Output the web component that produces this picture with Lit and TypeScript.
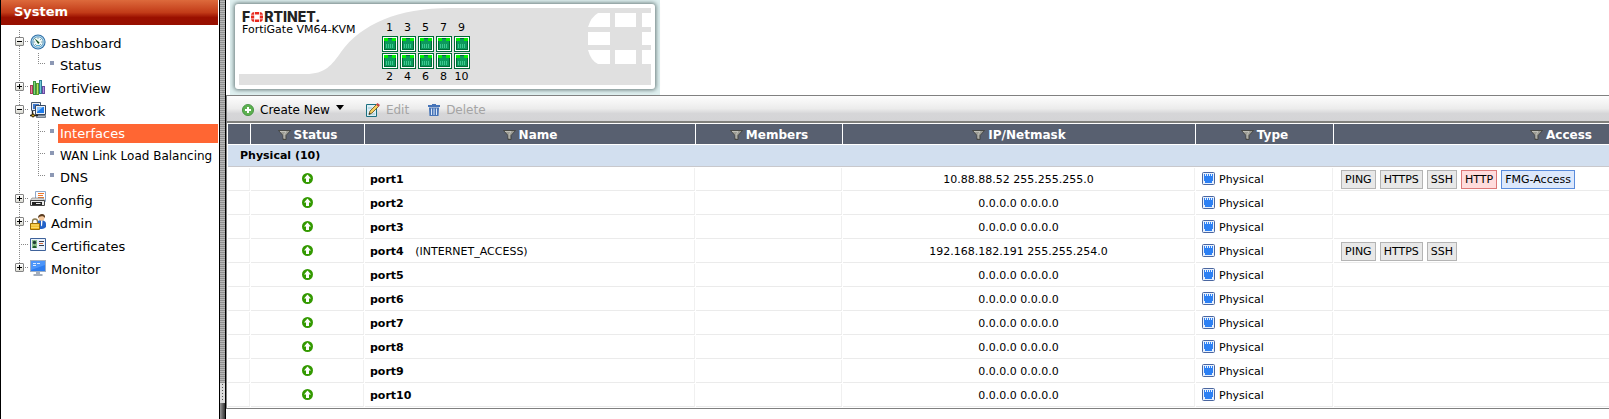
import { LitElement, html, svg, css, nothing } from "lit";
import { customElement, property, state } from "lit/decorators.js";
import { classMap } from "lit/directives/class-map.js";

const icons: Record<string, unknown> = {
  Dashboard: svg`<circle cx="8" cy="8" r="7.6" fill="#2f6fa6"/><circle cx="8" cy="8" r="6.5" fill="#b9dff2"/><circle cx="8" cy="8" r="5.2" fill="#f2faf4" stroke="#4f90bc" stroke-width=".8"/><path d="M4.6 8h-1M12.4 8h-1M8 3.6v1M11.2 4.8l-.8.8M4.8 11.2l.8-.8M11.2 11.2l-.8-.8" stroke="#37698a"/><path d="M4.2 4l5.400 4.6-1.400 1.400z" fill="#14501e"/><path d="M6 11.500h4" stroke="#57b0d8"/>`,
  FortiView: svg`<path d="M0 6h3v9H0z" fill="#b03a5c"/><path d="M1 7h1v7H1z" fill="#e2869e"/><path d="M3 2h3v14H3z" fill="#3c9440"/><path d="M4 3h1v12H4z" fill="#86d678"/><path d="M6 4h3v12H6z" fill="#5c9e2c"/><path d="M7 5h1v10H7z" fill="#b6e264"/><path d="M9 1h3v14H9z" fill="#2e7d96"/><path d="M10 2h1v12h-1z" fill="#74c8d8"/><path d="M12 7h3v8h-3z" fill="#6a4aa0"/><path d="M13 8h1v6h-1z" fill="#ae94dc"/>`,
  Network: svg`<path d="M1.500.5h9v8h-9z" fill="#e9edf2" stroke="#45566e"/><path d="M3 2h6v5H3z" fill="#3a78d0"/><path d="M5.500 3.500h10v9h-10z" fill="#eef1f6" stroke="#38485e"/><path d="M7 5h7v6H7z" fill="#1f7cec"/><path d="M7 5h6L7 10z" fill="#8cc4fa"/><path d="M6.500 13.500h9v2h-9z" fill="#aab4c0" stroke="#4c5a6c" stroke-width=".7"/><path d="M2.500 9v4M0 13.500h8" stroke="#222" stroke-width="1.4"/><path d="M3 11l2.4 2.4L3 15.8.6 13.4z" fill="#3e2e08"/><path d="M3 12.500l1 1-1 1-1-1z" fill="#f1c232"/>`,
  Config: svg`<path d="M5.5.5h10v10h-10z" fill="#fbfcff" stroke="#8fa7c8"/><path d="M8 2.500h6M8 4.500h5M8 6.500h6" stroke="#f07828"/><path d="M2 7h11l2 3H0z" fill="#d8d8d8" stroke="#777" stroke-width=".6"/><path d="M.5 9.500h14v5H.5z" fill="#ececec" stroke="#444"/><path d="M2 11h10v3H2z" fill="#222"/><path d="M6 12h4.500v1H6z" fill="#e8e8e8"/>`,
  Admin: svg`<path d="M7 15V9c0-2 2-3 4-3s5 1 5 4v3c-1 1-3 2-4 2z" fill="#2463c8"/><path d="M11 6.500l1.500 0-.5 6-1-1z" fill="#fff"/><circle cx="11.500" cy="3.800" r="3" fill="#f5c89c"/><path d="M8 4C8 1 10 0 12 0s3.500 1.400 3 4c-1-1.500-2-2-3.500-1.800S9 3 8 4z" fill="#5a3c20"/><path d="M2.500 10V7.500a2.500 2.500 0 0 1 5 0V10" fill="none" stroke="#8a7a50" stroke-width="1.3"/><path d="M.5 9.500h9v6h-9z" fill="#f2b820" stroke="#9a6c08"/><path d="M1 11h8M1 13.300h8" stroke="#fde37c"/>`,
  Certificates: svg`<path d="M.5 1.500h15v12H.500z" fill="#e9f2fc" stroke="#3f629a"/><path d="M2 3h5v8H2z" fill="#8cc08c"/><circle cx="4.500" cy="5.500" r="1.700" fill="#1c3c34"/><path d="M2.500 11c0-3 4-3 4 0z" fill="#1c5c2c"/><path d="M9 4.500h5" stroke="#303c50"/><path d="M9 6.500h4" stroke="#d87040"/><path d="M9 8.500h5" stroke="#303c50"/>`,
  Monitor: svg`<path d="M0 0h16v12H0z" fill="#9eaec4"/><path d="M1 1h14v10H1z" fill="#2d7df0"/><path d="M1 1h14v4L1 10z" fill="#4b95fa"/><path d="M3 3.500h3M7 3.500h3M3 5.500h3" stroke="#d8eaff"/><path d="M6 12h4v2h2.500v2h-9v-2H6z" fill="#a4aebc"/>`,
};

interface TreeNode { label: string; open?: boolean; leaf?: boolean; children?: string[] }

const tree: TreeNode[] = [
  { label: "Dashboard", open: true, children: ["Status"] },
  { label: "FortiView" },
  { label: "Network", open: true, children: ["Interfaces", "WAN Link Load Balancing", "DNS"] },
  { label: "Config" },
  { label: "Admin" },
  { label: "Certificates", leaf: true },
  { label: "Monitor" },
];

@customElement("nav-tree")
class NavTree extends LitElement {
  @state() selected = "Interfaces";
  @state() closed = new Set<string>();

  static styles = css`
    :host { display: block; background: #fff; }
    h2 {
      margin: 0; padding: 0 13px; height: 25px; line-height: 23px; box-sizing: border-box;
      font-size: 13px; font-weight: bold; color: #fff;
      background: linear-gradient(#dd6a3c, #c23b18 50%, #9a1000 70%, #970f00);
    }
    ul { list-style: none; margin: 0; padding: 0; }
    .root {
      margin-top: 5px;
      background: repeating-linear-gradient(#888 0 1px, transparent 1px 2px) 18px 0 / 1px calc(100% - 12px) no-repeat;
    }
    .row { display: flex; align-items: center; height: 23px; padding-left: 14px; }
    .toggle {
      width: 9px; height: 9px; padding: 0; border: 1px solid #848484; border-radius: 1px;
      background: linear-gradient(#fff, #dcdcd4); display: grid; place-items: center;
    }
    .toggle svg { display: block; }
    .blank { width: 4px; margin-right: 1px; }
    .dash { width: 4px; height: 1px; margin: 0 1px; background: repeating-linear-gradient(90deg, #888 0 1px, transparent 1px 2px); }
    .blank + .dash { width: 8px; }
    .icon { width: 16px; height: 16px; margin-right: 5px; flex: none; }
    a { color: #000; text-decoration: none; white-space: nowrap; }
    .row > a { padding-top: 4px; }
    .sub {
      background: repeating-linear-gradient(#888 0 1px, transparent 1px 2px) 37px 0 / 1px calc(100% - 12px) no-repeat;
    }
    .child { display: flex; align-items: center; height: 22px; padding-left: 37px; }
    .child .dash { width: 8px; margin: 0 4px 2px 0; }
    .bullet { width: 4px; height: 4px; margin: 0 4px 2px 0; background: #8c98b4; flex: none; }
    .child a { flex: 1; padding-left: 2px; height: 19px; line-height: 20px; min-width: 0; margin-top: 2px; }
    .child a.long { font-size: 12px; }
    .child a.selected { background: #ff6633; color: #fff; }
  `;

  toggle(label: string) {
    const next = new Set(this.closed);
    next.has(label) ? next.delete(label) : next.add(label);
    this.closed = next;
  }

  render() {
    return html`
      <h2>System</h2>
      <ul class="root">
        ${tree.map((n) => {
          const open = !!n.open && !this.closed.has(n.label);
          return html`<li>
            <div class="row">
              ${n.leaf
                ? html`<span class="blank"></span>`
                : html`<button class="toggle" aria-label="Toggle ${n.label}" aria-expanded=${open} @click=${() => this.toggle(n.label)}>
                    <svg width="5" height="5"><path d=${open ? "M0 2.5h5" : "M0 2.5h5M2.500 0v5"} stroke="#000" /></svg>
                  </button>`}
              <span class="dash"></span>
              <svg class="icon" viewBox="0 0 16 16">${icons[n.label]}</svg>
              <a href="#${n.label}">${n.label}</a>
            </div>
            ${open
              ? html`<ul class="sub">
                  ${n.children!.map(
                    (c) => html`<li class="child">
                      <span class="dash"></span><span class="bullet"></span>
                      <a href="#${c}" class=${classMap({ selected: c === this.selected, long: c.length > 20 })} @click=${() => (this.selected = c)}>${c}</a>
                    </li>`
                  )}
                </ul>`
              : nothing}
          </li>`;
        })}
      </ul>
    `;
  }
}

@customElement("device-panel")
class DevicePanel extends LitElement {
  @property() model = "FortiGate VM64-KVM";

  static styles = css`
    :host { display: block; }
    .halo { width: max-content; margin-left: 4px; padding: 4px 5px 6px; background: #dff0f0; }
    .unit {
      display: grid; padding: 4px; background: #fff; border-radius: 3px;
      box-shadow: 0 0 4px 1px #667878;
    }
    .face, .front { grid-area: 1 / 1; }
    .face { display: block; }
    .front { display: flex; align-items: flex-start; gap: 26px; padding: 0 3px; font-size: 11px; line-height: 14px; }
    .brand { padding-top: 2px; }
    .logo {
      display: flex; align-items: center; height: 13px; color: #222;
      font: 800 14px/12px Inter, "DejaVu Sans", sans-serif;
    }
    .ring { margin: 0 1px; }
    .ports { display: grid; grid-template-columns: repeat(5, 16px); gap: 1px 2px; justify-items: center; padding-top: 12px; }
    .ports span { line-height: 15px; }
    .ports .low { line-height: 14px; }
    .ports svg { display: block; }
  `;

  jack() {
    return html`<svg width="16" height="16" viewBox="0 0 16 16">
      <path fill="#006a36" d="M0 0h16v16H0z" /><path fill="#fff" d="M1 1h14v14H1z" />
      <path fill="#006a36" d="M2 2h12v12H2z" />
      <path fill="#00f000" d="M2 2h4v3H2zM10 2h4v3h-4z" />
      <path fill="#0c9a5c" d="M6 3h4v2h3v8H3V5h3z" />
      <path stroke="#3cc890" d="M4.500 8v4M6.500 8v4M8.500 8v4M10.500 8v4" />
    </svg>`;
  }

  render() {
    const odd = [1, 3, 5, 7, 9];
    return html`<div class="halo"><div class="unit">
      <svg class="face" width="412" height="77" viewBox="0 0 412 77">
        <path fill="#e0e0e0" d="M0 66H67C86 66 93 57 102 44C122 16 160 0 210 0H412V77H0Z" />
        <path fill="#fff" d="M371 5v14h-22q3-10 10-14zM376 5h21v14h-21zM403 5h9v14h-9zM349 24h22v13h-22zM403 24h9v13h-9zM349 42h22v14h-12q-7-3-10-14zM376 42h21v14h-21zM403 42h9v14h-9z" />
      </svg>
      <div class="front">
        <div class="brand">
          <div class="logo" role="img" aria-label="Fortinet">
            <span>F</span>
            <svg class="ring" width="12" height="10" viewBox="0 0 12 10"><path fill="#e8281e" d="M4 0h4v2.500H4zM4 7.500h4V10H4zM0 3.600h3.200v2.800H0zM8.800 3.600H12v2.800H8.800zM3.200 0v2.800H0Q.3.300 3.200 0zM8.800 0v2.800H12Q11.700.300 8.800 0zM3.200 10V7.200H0Q.3 9.700 3.200 10zM8.800 10V7.200H12Q11.700 9.700 8.800 10z" /></svg>
            <span>RTINET.</span>
          </div>
          <div>${this.model}</div>
        </div>
        <div class="ports">
          ${odd.map((n) => html`<span>${n}</span>`)}
          ${odd.map(() => this.jack())}${odd.map(() => this.jack())}
          ${odd.map((n) => html`<span class="low">${n + 1}</span>`)}
        </div>
      </div>
    </div></div>`;
  }
}

interface Port { name: string; alias?: string; ip: string; access: string[] }

const idle = "0.0.0.0 0.0.0.0";
const ports: Port[] = [
  { name: "port1", ip: "10.88.88.52 255.255.255.0", access: ["PING", "HTTPS", "SSH", "HTTP", "FMG-Access"] },
  { name: "port2", ip: idle, access: [] },
  { name: "port3", ip: idle, access: [] },
  { name: "port4", alias: "(INTERNET_ACCESS)", ip: "192.168.182.191 255.255.254.0", access: ["PING", "HTTPS", "SSH"] },
  ...[5, 6, 7, 8, 9, 10].map((n) => ({ name: `port${n}`, ip: idle, access: [] })),
];

@customElement("interface-table")
class InterfaceTable extends LitElement {
  static styles = css`
    :host { display: block; border: 1px solid #808080; border-right: 0; background: #fff; }
    .bar {
      display: flex; align-items: center; height: 25px; padding-left: 15px;
      border-bottom: 2px solid #80807c; background: linear-gradient(#fdfdfd, #ececec 50%, #d6d6d8 70%, #d4d4d6);
    }
    .bar button {
      display: flex; align-items: center; gap: 6px; border: 0; padding: 2px 0 0; background: none;
      font: 12px Verdana, "DejaVu Sans", sans-serif; color: #000; margin-right: 22px; line-height: 16px;
    }
    .bar button:disabled { color: #a4a4a4; }
    .bar button + button + button { margin-left: -3px; }
    .caret { margin-bottom: 4px; }
    table { border-spacing: 1px; table-layout: fixed; width: 100%; min-width: 1562px; font-size: 11px; }
    th, td { padding: 0; box-sizing: border-box; }
    .c-sel { width: 22px; } .c-status { width: 113px; } .c-name { width: 330px; } .c-members { width: 146px; }
    .c-ip { width: 352px; } .c-type { width: 137px; }
    thead th { height: 20px; background: #586070; color: #fff; font-size: 12px; line-height: 18px; }
    thead div { display: flex; justify-content: center; align-items: center; gap: 3px; padding-top: 2px; }
    .group th { height: 22px; padding-left: 12px; text-align: left; background: #d2dfef; border-bottom: 1px solid #c8c8cc; line-height: 20px; }
    td { height: 23px; border-right: 1px solid #f0f0f0; border-bottom: 1px solid #ebebeb; line-height: 19px; white-space: nowrap; }
    .mid { text-align: center; }
    .up { display: block; margin: 0 auto 2px; }
    .name { padding-left: 5px; }
    .name b { margin-right: 8px; }
    .type { display: flex; align-items: center; gap: 4px; padding-left: 6px; }
    .type svg { margin-bottom: 2px; }
    .tags { display: flex; gap: 4px; padding-left: 7px; }
    .tag { height: 19px; box-sizing: border-box; padding: 0 3px; line-height: 17px; border: 1px solid #b4b4b4; background: #e8e8e8; }
    .tag.http { border-color: #dc7878; background: #ffdcdc; }
    .tag.fmg { border-color: #5a8cdc; background: #dce8fc; }
  `;

  render() {
    const heads = ["Status", "Name", "Members", "IP/Netmask", "Type", "Access"];
    return html`
      <div class="bar">
        <button>
          <svg width="12" height="12" viewBox="0 0 12 12"><circle cx="6" cy="6" r="5.600" fill="#5cb050" stroke="#3e8e3a" stroke-width=".8" /><path d="M6 3v6M3 6h6" stroke="#fff" stroke-width="2" /></svg>
          <span>Create New</span>
          <svg class="caret" width="8" height="5" viewBox="0 0 8 5"><path d="M0 0h8L4 5z" /></svg>
        </button>
        <button disabled>
          <svg width="14" height="14" viewBox="0 0 14 14"><path d="M.5 1.500h10v12H.500z" fill="#dceef4" stroke="#1a7080" /><path d="M2 11h7M2 5h4" stroke="#9cc4d0" /><path d="M3 11.500l1-3.500L10.500 1.500l2 2L6 10z" fill="#f4d060" stroke="#6a4a10" stroke-width=".8" /><path d="M10 1.500l1.500-1.500L14 2l-1.500 2z" fill="#c84848" /><path d="M3 11.500l.5-1.800 1.300 1.300z" fill="#222" /></svg>
          <span>Edit</span>
        </button>
        <button disabled>
          <svg width="12" height="12" viewBox="0 0 12 12"><path d="M4 0h4v1h4v2H0V1h4z" fill="#4674b8" /><path d="M1 3.500h10L10.500 12h-9z" fill="#4674b8" /><path d="M3.500 4.500v6.500M6 4.500v6.500M8.500 4.500v6.500" stroke="#dce8f8" /></svg>
          <span>Delete</span>
        </button>
      </div>
      <table>
        <colgroup>
          <col class="c-sel" /><col class="c-status" /><col class="c-name" /><col class="c-members" /><col class="c-ip" /><col class="c-type" /><col />
        </colgroup>
        <thead>
          <tr>
            <th></th>
            ${heads.map(
              (h) => html`<th scope="col"><div>
                <svg width="13" height="10" viewBox="0 0 13 10"><path d="M.5.500h12L8 5.500V9.500H5V5.500z" fill="#9c9c94" stroke="#3c3c38" stroke-width=".8" /><path d="M2 1.500h6L6 5v3" fill="none" stroke="#c8c8c0" stroke-width=".8" /></svg>${h}
              </div></th>`
            )}
          </tr>
        </thead>
        <tbody>
          <tr class="group"><th colspan="7" scope="rowgroup">Physical (${ports.length})</th></tr>
          ${ports.map(
            (p) => html`<tr>
              <td></td>
              <td><svg class="up" width="11" height="11" viewBox="0 0 11 11"><circle cx="5.500" cy="5.500" r="5.500" fill="#339900" /><path fill="#fff" d="M5.500 1.500L9 5.500H7V9H4V5.500H2z" /></svg></td>
              <td class="name"><b>${p.name}</b> ${p.alias ?? nothing}</td>
              <td></td>
              <td class="mid">${p.ip}</td>
              <td><div class="type">
                <svg width="13" height="13" viewBox="0 0 13 13"><rect x=".5" y=".5" width="12" height="12" rx="1" fill="#e8f0fc" stroke="#4a66a0" /><path fill="#2c80f4" d="M2 2h9v7h-1v2H3V9H2z" /><path stroke="#e4f0ff" d="M3.500 2v2M5.500 2v2M7.500 2v2M9.500 2v2" /></svg>Physical
              </div></td>
              <td><div class="tags">${p.access.map(
                (a) => html`<span class=${classMap({ tag: true, http: a === "HTTP", fmg: a === "FMG-Access" })}>${a}</span>`
              )}</div></td>
            </tr>`
          )}
        </tbody>
      </table>
    `;
  }
}

@customElement("app-root")
class AppRoot extends LitElement {
  static styles = css`
    :host {
      display: flex; min-height: 100vh; box-sizing: border-box; overflow: hidden; background: #fff;
      font: 13px Verdana, "DejaVu Sans", sans-serif; color: #000; border-left: 1px solid #000;
    }
    nav-tree { flex: 0 0 217px; min-width: 0; overflow: hidden; margin-right: 1px; }
    .splitter {
      flex: 0 0 5px; display: flex; flex-direction: column; border: solid #000; border-width: 0 1px;
      background: repeating-linear-gradient(#909090 0 1px, #b8b8b8 1px 2px);
    }
    .grip {
      height: 20px; margin-top: auto;
      background: repeating-linear-gradient(#555 0 1px, transparent 1px 3px) 2px 1px / 1px 16px no-repeat #dcdcdc;
    }
    .end { height: 16px; background: linear-gradient(90deg, #999, #333); }
    main { flex: 1; min-width: 0; overflow: hidden; }
  `;

  render() {
    return html`
      <nav-tree></nav-tree>
      <div class="splitter"><div class="grip"></div><div class="end"></div></div>
      <main>
        <device-panel></device-panel>
        <interface-table></interface-table>
      </main>
    `;
  }
}
